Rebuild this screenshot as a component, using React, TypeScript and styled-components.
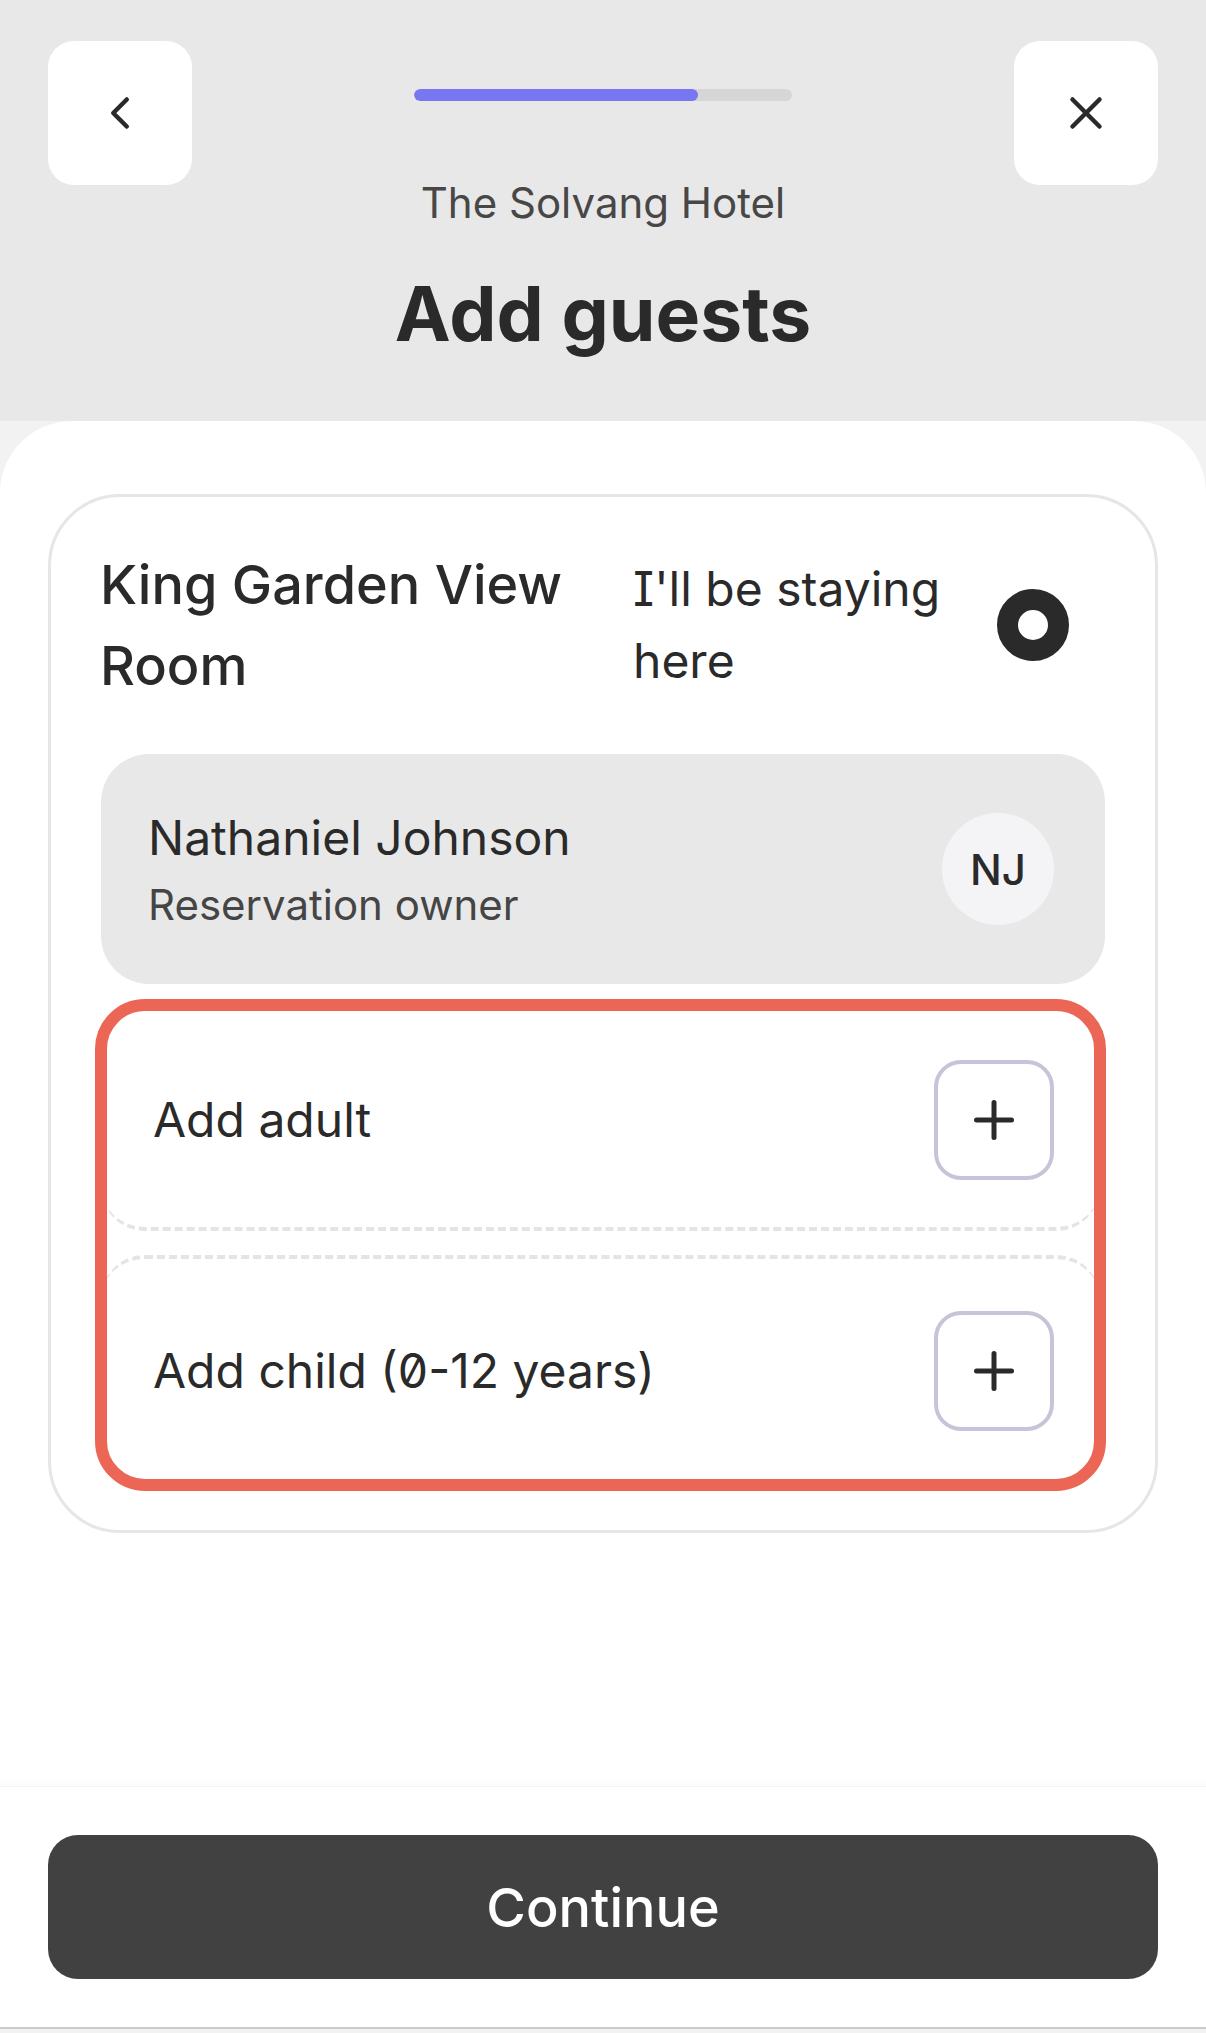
import React from "react";
import styled, { createGlobalStyle } from "styled-components";
import { ChevronLeft, X, Plus } from "lucide-react";

const GlobalStyle = createGlobalStyle`
  html, body {
    margin: 0;
    padding: 0;
    background: #f2f2f2;
  }
  body {
    font-family: Inter, "Noto Sans", sans-serif;
    font-feature-settings: "cv08" 1, "zero" 1;
    color: #2a2a2a;
  }
  * {
    box-sizing: border-box;
  }
`;

const Page = styled.div`
  display: flex;
  flex-direction: column;
  min-height: 100vh;
  padding-bottom: 4px;
  background: #f2f2f2;
`;

const Header = styled.header`
  display: grid;
  grid-template-columns: 144px 1fr 144px;
  padding: 41px 48px 64px;
  background: #e8e8e8;
`;

const IconButton = styled.button`
  display: flex;
  align-items: center;
  justify-content: center;
  width: 144px;
  height: 144px;
  padding: 0;
  border: none;
  border-radius: 26px;
  background: #ffffff;
  color: #2a2a2a;
`;

const HeaderCenter = styled.div`
  display: flex;
  flex-direction: column;
  align-items: center;
  padding-top: 48px;
`;

const Progress = styled.div`
  width: 378px;
  height: 12px;
  border-radius: 6px;
  background: #d6d6d6;
  overflow: hidden;
`;

const ProgressFill = styled.div`
  height: 100%;
  border-radius: 6px;
  background: #7777f2;
`;

const HotelName = styled.div`
  margin-top: 70px;
  font-size: 42px;
  line-height: 63px;
  color: #474747;
`;

const Title = styled.h1`
  margin: 37px 0 0;
  font-size: 75px;
  line-height: 86px;
  font-weight: 700;
  color: #2a2a2a;
  white-space: nowrap;
`;

const Sheet = styled.main`
  flex: 1;
  padding: 73px 48px 48px;
  background: #ffffff;
  border-radius: 72px 72px 0 0;
`;

const RoomCard = styled.section`
  padding: 47px 50px 45px;
  border: 3px solid #e6e6e6;
  border-radius: 72px;
`;

const RoomHead = styled.div`
  display: grid;
  grid-template-columns: 1fr 330px 72px;
  column-gap: 34px;
  align-items: center;
  padding-right: 36px;
`;

const RoomName = styled.h2`
  margin: 0 0 0 -1px;
  font-size: 54px;
  line-height: 81px;
  font-weight: 500;
`;

const StayLabel = styled.div`
  font-size: 48px;
  line-height: 72px;
`;

const Radio = styled.div`
  width: 72px;
  height: 72px;
  border-radius: 50%;
  border: 21px solid #2a2a2a;
  background: #ffffff;
`;

const OwnerBox = styled.div`
  display: flex;
  align-items: center;
  justify-content: space-between;
  margin-top: 48px;
  padding: 48px 51px 48px 47px;
  border-radius: 48px;
  background: #e8e8e8;
`;

const OwnerName = styled.div`
  font-size: 48px;
  line-height: 72px;
`;

const OwnerRole = styled.div`
  font-size: 42px;
  line-height: 62px;
  color: #454545;
`;

const Avatar = styled.div`
  display: flex;
  align-items: center;
  justify-content: center;
  width: 112px;
  height: 112px;
  border-radius: 50%;
  background: #f4f4f6;
  font-size: 42px;
  font-weight: 500;
`;

const AddGroup = styled.div`
  display: flex;
  flex-direction: column;
  gap: 24px;
  margin: 21px 5px 0 0;
  border-radius: 44px;
  outline: 12px solid #ec6656;
  outline-offset: -6px;
`;

const AddRow = styled.div<{ $edge: "top" | "bottom" }>`
  display: flex;
  align-items: center;
  justify-content: space-between;
  padding: 0 46px 0 52px;
  border-radius: 44px;
  background: #ffffff;
  ${({ $edge }) =>
    $edge === "bottom"
      ? "height: 226px; border-bottom: 4px dashed #e4e4e4; padding-top: 8px;"
      : "height: 230px; border-top: 4px dashed #e4e4e4; padding-bottom: 2px;"}
`;

const AddLabel = styled.span`
  font-size: 48px;
  line-height: 72px;
`;

const PlusButton = styled.button`
  display: flex;
  align-items: center;
  justify-content: center;
  width: 120px;
  height: 120px;
  padding: 0;
  border: 4px solid #c6c4d8;
  border-radius: 27px;
  background: #ffffff;
  color: #2a2a2a;
`;

const Footer = styled.footer`
  padding: 48px;
  background: #ffffff;
  border-top: 1px solid #f3f3f3;
  border-bottom: 2px solid #cbcbcb;
  box-shadow: 0 -3px 8px rgba(0, 0, 0, 0.025);
`;

const ContinueButton = styled.button`
  display: block;
  width: 100%;
  height: 144px;
  border: none;
  border-radius: 30px;
  background: #414141;
  color: #ffffff;
  font-family: Inter, "Noto Sans", sans-serif;
  font-size: 54px;
  font-weight: 500;
`;

const App = () => {
  const step = 0.75;

  return (
    <Page>
      <GlobalStyle />
      <Header>
        <IconButton aria-label="Back">
          <ChevronLeft size={54} strokeWidth={2} />
        </IconButton>
        <HeaderCenter>
          <Progress>
            <ProgressFill style={{ width: `${step * 100}%` }} />
          </Progress>
          <HotelName>The Solvang Hotel</HotelName>
          <Title>Add guests</Title>
        </HeaderCenter>
        <IconButton aria-label="Close">
          <X size={54} strokeWidth={2} />
        </IconButton>
      </Header>

      <Sheet>
        <RoomCard>
          <RoomHead>
            <RoomName>King Garden View Room</RoomName>
            <StayLabel>I'll be staying here</StayLabel>
            <Radio />
          </RoomHead>

          <OwnerBox>
            <div>
              <OwnerName>Nathaniel Johnson</OwnerName>
              <OwnerRole>Reservation owner</OwnerRole>
            </div>
            <Avatar>NJ</Avatar>
          </OwnerBox>

          <AddGroup>
            <AddRow $edge="bottom">
              <AddLabel>Add adult</AddLabel>
              <PlusButton aria-label="Add adult">
                <Plus size={60} strokeWidth={2} />
              </PlusButton>
            </AddRow>
            <AddRow $edge="top">
              <AddLabel>Add child (0-12 years)</AddLabel>
              <PlusButton aria-label="Add child">
                <Plus size={60} strokeWidth={2} />
              </PlusButton>
            </AddRow>
          </AddGroup>
        </RoomCard>
      </Sheet>

      <Footer>
        <ContinueButton>Continue</ContinueButton>
      </Footer>
    </Page>
  );
};

export default App;
